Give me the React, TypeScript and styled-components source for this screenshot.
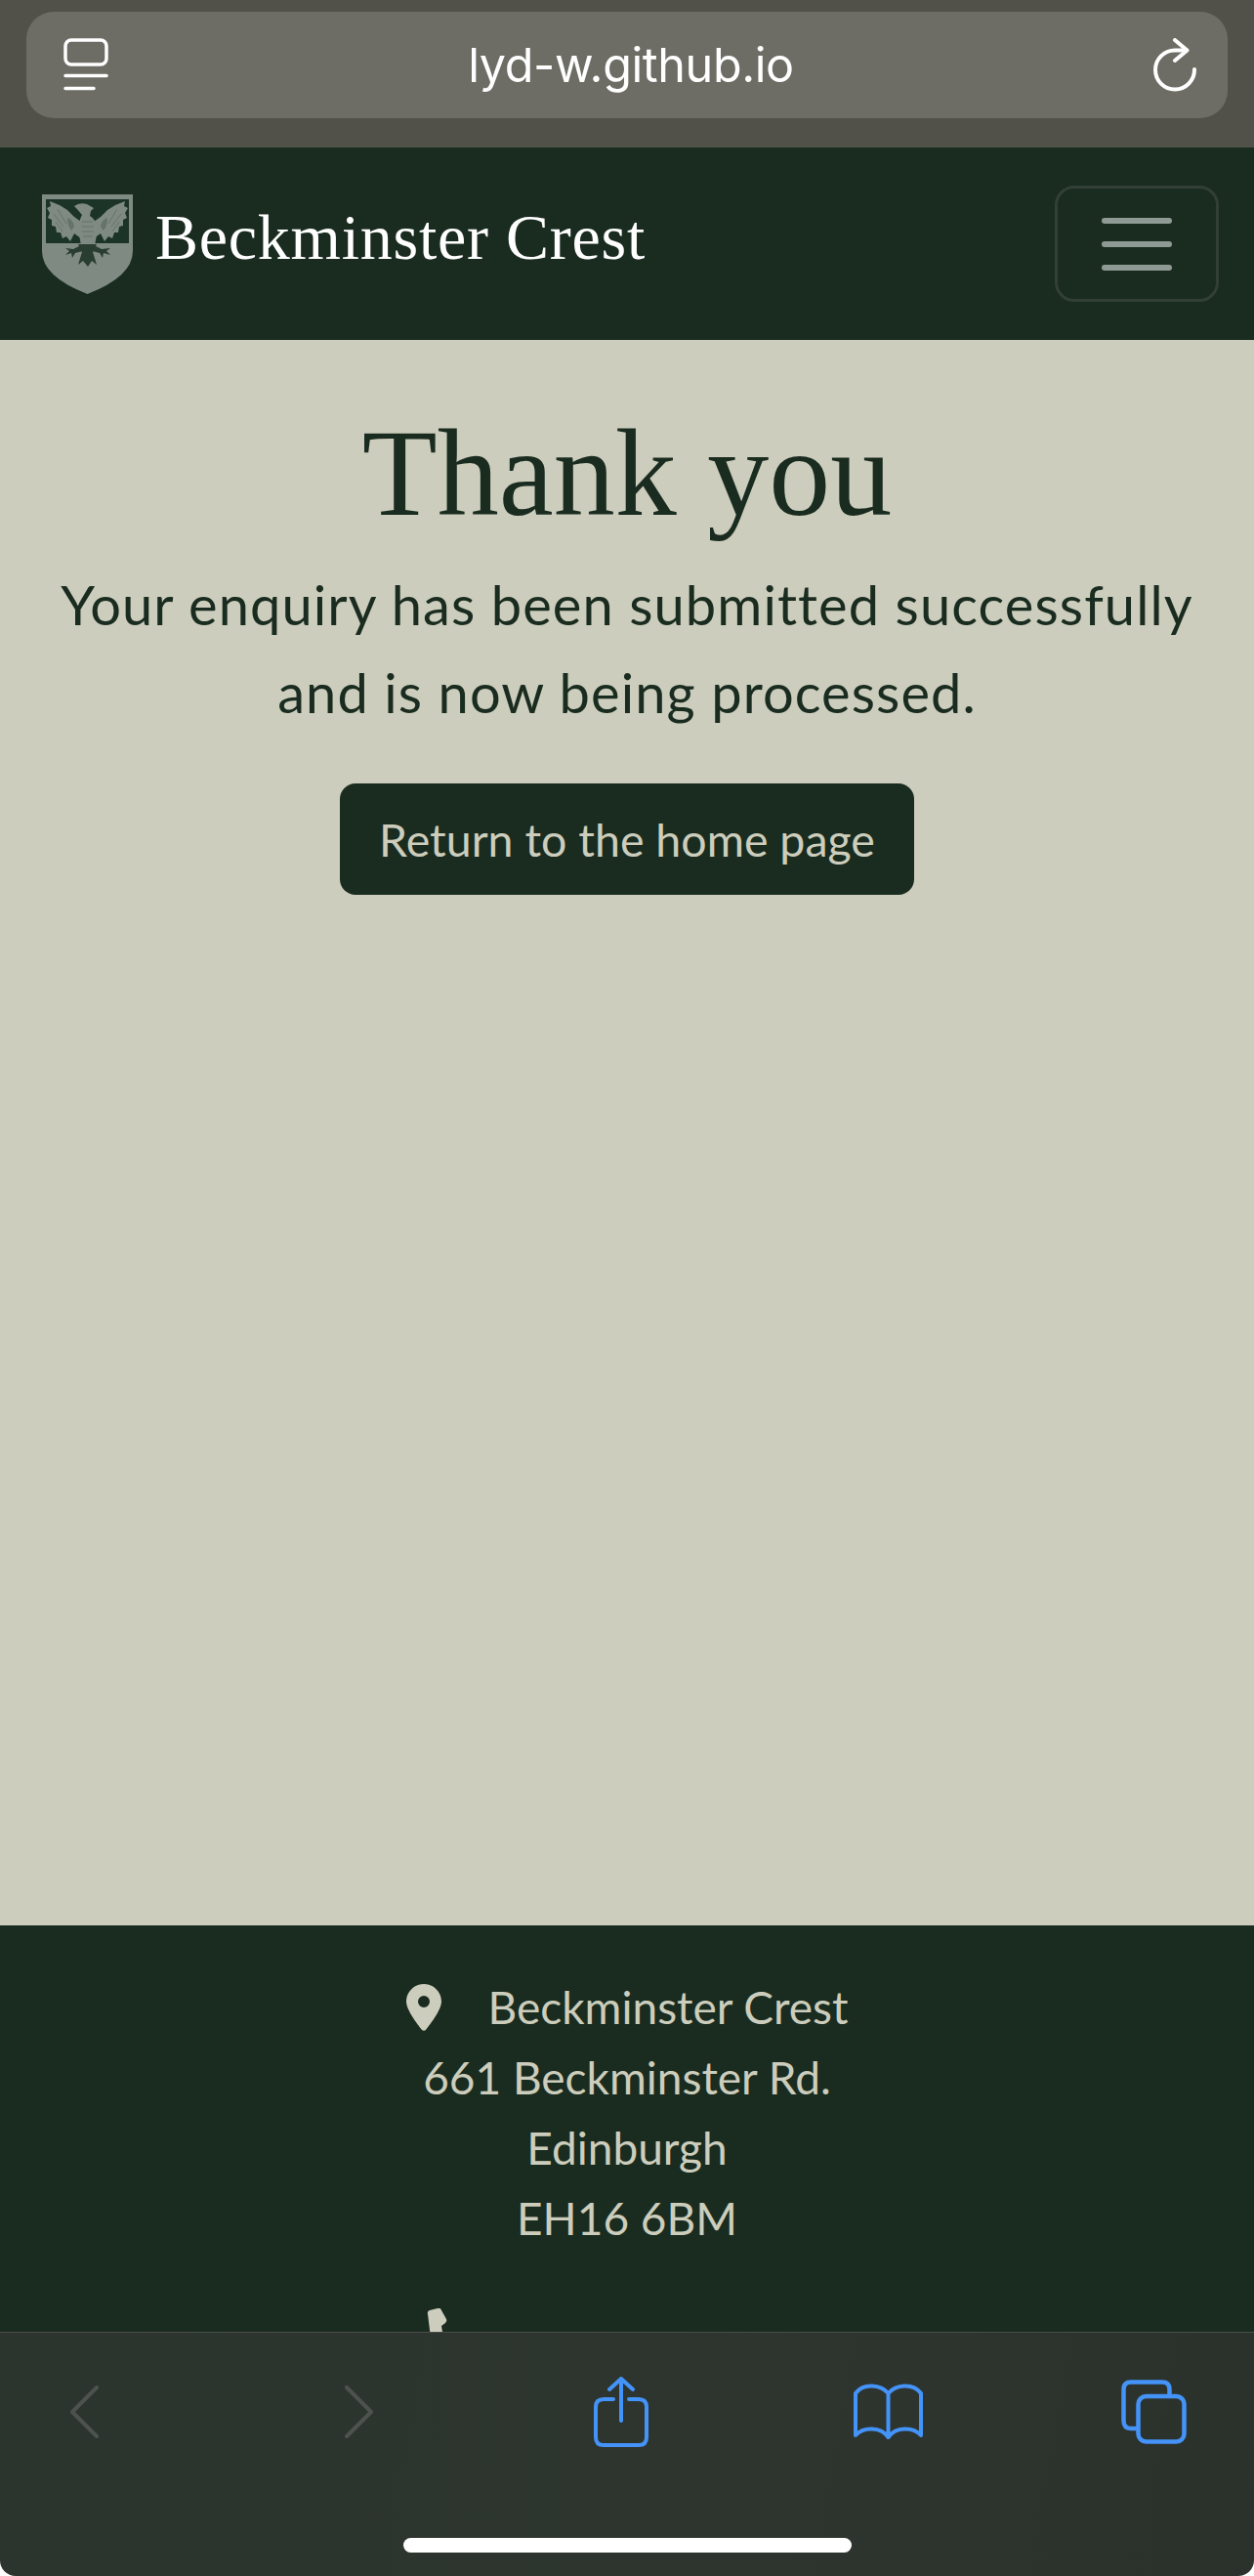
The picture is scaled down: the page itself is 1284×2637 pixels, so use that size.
import React from "react";
import styled, { createGlobalStyle } from "styled-components";

const GlobalStyle = createGlobalStyle`
  html, body {
    margin: 0;
    padding: 0;
    background: #ffffff;
  }
`;

const Page = styled.div`
  display: flex;
  flex-direction: column;
  width: 1284px;
  height: 2637px;
  overflow: hidden;
  font-family: "Lato", "Noto Sans", sans-serif;
`;

const BrowserBar = styled.div`
  flex: none;
  box-sizing: border-box;
  height: 151px;
  padding: 12px 27px 30px;
  background: #51514a;
`;

const AddressBar = styled.div`
  display: flex;
  align-items: center;
  justify-content: space-between;
  box-sizing: border-box;
  height: 109px;
  padding: 0 30px 0 38px;
  border-radius: 28px;
  background: #6d6d65;
`;

const UrlText = styled.span`
  font-family: "Inter", "Liberation Sans", sans-serif;
  font-size: 48.500px;
  color: #ffffff;
  letter-spacing: -0.4px;
`;

const NavBar = styled.nav`
  flex: none;
  display: flex;
  align-items: center;
  justify-content: space-between;
  box-sizing: border-box;
  height: 197px;
  padding: 0 36px 0 43px;
  background: #1a2c20;
`;

const Brand = styled.a`
  display: flex;
  align-items: center;
  gap: 23px;
  font-family: "Liberation Serif", serif;
  font-size: 66px;
  letter-spacing: 0.75px;
  color: #ffffff;
`;

const BrandName = styled.span`
  position: relative;
  top: -7px;
`;

const MenuToggle = styled.button`
  display: flex;
  flex-direction: column;
  align-items: center;
  justify-content: center;
  gap: 18px;
  box-sizing: border-box;
  width: 168px;
  height: 119px;
  padding: 0;
  background: transparent;
  border: 3px solid #323f36;
  border-radius: 20px;
`;

const MenuBar = styled.span`
  width: 72px;
  height: 6px;
  border-radius: 3px;
  background: #8f9a94;
`;

const Main = styled.main`
  flex: 1;
  display: flex;
  flex-direction: column;
  align-items: center;
  padding-top: 62px;
  background: #cccdbc;
  color: #1a2c20;
  text-align: center;
`;

const Title = styled.h1`
  margin: 0;
  font-family: "Liberation Serif", serif;
  font-size: 126px;
  font-weight: 400;
  line-height: 150px;
`;

const Message = styled.p`
  margin: 14px 0 0;
  font-size: 56px;
  line-height: 90px;
  letter-spacing: 1.08px;
`;

const HomeButton = styled.a`
  display: flex;
  align-items: center;
  justify-content: center;
  box-sizing: border-box;
  width: 588px;
  height: 114px;
  margin-top: 48px;
  border-radius: 16px;
  background: #1a2c20;
  color: #cccdbc;
  font-size: 46.500px;
`;

const Footer = styled.footer`
  flex: none;
  box-sizing: border-box;
  height: 416px;
  padding-top: 48px;
  overflow: hidden;
  background: #1a2c20;
  color: #cccdbc;
  font-size: 46px;
  line-height: 72px;
  text-align: center;
`;

const AddressLine = styled.div`
  display: flex;
  align-items: center;
  justify-content: center;
`;

const PinIcon = styled.svg`
  width: 36px;
  height: 48px;
  margin-right: 48px;
  fill: #cccdbc;
`;

const PhoneRow = styled.div`
  display: flex;
  padding: 56px 0 0 437px;
`;

const PhoneIcon = styled.svg`
  width: 48px;
  height: 48px;
  fill: #cccdbc;
`;

const Toolbar = styled.div`
  flex: none;
  box-sizing: border-box;
  height: 250px;
  padding-top: 45px;
  border-top: 1px solid #4a4c4a;
  border-radius: 0 0 16px 16px;
  background: linear-gradient(100deg, #2c342e, #2e352f 60%, #2b322c);
`;

const ToolRow = styled.div`
  display: flex;
  align-items: center;
  height: 72px;
  padding-left: 72px;
`;

const ToolIcon = styled.svg<{ $after?: number }>`
  flex: none;
  margin-right: ${(p) => p.$after ?? 0}px;
  fill: none;
  stroke-linecap: round;
  stroke-linejoin: round;
`;

const HomeIndicator = styled.div`
  width: 459px;
  height: 15px;
  margin: 93px auto 0;
  border-radius: 8px;
  background: #ffffff;
`;

const TabOverviewIcon = () => (
  <svg width="46" height="56" viewBox="0 0 46 56" fill="none" stroke="#ffffff" strokeLinecap="round" strokeWidth="3.5">
    <rect x="2" y="2" width="42" height="25" rx="6" />
    <path d="M2 38.5h42M2 51.5h29" />
  </svg>
);

const ReloadIcon = () => (
  <svg width="46" height="56" viewBox="0 0 46 56" fill="none" stroke="#ffffff" strokeLinecap="round" strokeLinejoin="round" strokeWidth="4">
    <path d="M42 32a20 20 0 1 1-20-19.5h12" />
    <path d="M22 2l12.500 10.500L22 23" />
  </svg>
);

const CrestIcon = () => (
  <svg width="93" height="102" viewBox="0 0 93 102">
    <path d="M0 0H93V58Q93 84 46.500 102Q0 84 0 58Z" fill="#7f8b82" />
    <path d="M4 5H89V50H4Z" fill="#1c3427" />
    {/* wings */}
    <path
      d="M33 40L29 48 25 43 21 45 19 39 15 39 14 33 10 32 10 26 6 24 8 19 5 14 9 12 8 7 18 11 26 16 33 23 40 28 40 45 Z"
      fill="#7f8b82"
    />
    <path
      d="M60 40L64 48 68 43 72 45 74 39 78 39 79 33 83 32 83 26 87 24 85 19 88 14 84 12 85 7 75 11 67 16 60 23 53 28 53 45 Z"
      fill="#7f8b82"
    />
    <path d="M26 24Q32 26 33 33L30 37Q26 32 26 24Z" fill="#667369" />
    <path d="M67 24Q61 26 60 33L63 37Q67 32 67 24Z" fill="#667369" />
    <path d="M12 20L22 33M16 15L25 30M14 28L21 38" stroke="#667369" strokeWidth="1" fill="none" />
    <path d="M81 20L71 33M77 15L68 30M79 28L72 38" stroke="#667369" strokeWidth="1" fill="none" />
    {/* head and body */}
    <path d="M33 12Q38 8 46 10L53 14 50 17 49 22Q56 26 57 36L54 52H40L37 36Q38 26 41 21 37 16 33 12Z" fill="#7f8b82" />
    <path d="M41 28H52M41 33H53M41 38H53M42 43H52" stroke="#667369" strokeWidth="1" />
    {/* legs and tail */}
    <path d="M37 51H56L52 59 56 72 51 68 47 74 42 68 37 72 41 59Z" fill="#2a3d31" />
    <path d="M40 52L32 56 24 55 28 58 24 62 30 60 31 65 34 60 42 58Z" fill="#2a3d31" />
    <path d="M53 52L61 56 70 55 66 58 70 62 63 60 62 65 59 60 51 58Z" fill="#2a3d31" />
  </svg>
);

const App = () => {
  return (
    <Page>
      <GlobalStyle />
      <BrowserBar>
        <AddressBar>
          <TabOverviewIcon />
          <UrlText>lyd-w.github.io</UrlText>
          <ReloadIcon />
        </AddressBar>
      </BrowserBar>
      <NavBar>
        <Brand>
          <CrestIcon />
          <BrandName>Beckminster Crest</BrandName>
        </Brand>
        <MenuToggle aria-label="Toggle navigation">
          <MenuBar />
          <MenuBar />
          <MenuBar />
        </MenuToggle>
      </NavBar>
      <Main>
        <Title>Thank you</Title>
        <Message>
          Your enquiry has been submitted successfully
          <br />
          and is now being processed.
        </Message>
        <HomeButton>Return to the home page</HomeButton>
      </Main>
      <Footer>
        <AddressLine>
          <PinIcon viewBox="0 0 384 512">
            <path d="M215 499C266 435 384 280 384 192 384 86 298 0 192 0S0 86 0 192c0 88 118 243 169 307 12 15 34 15 46 0zM192 128a64 64 0 1 1 0 128 64 64 0 1 1 0-128z" />
          </PinIcon>
          Beckminster Crest
        </AddressLine>
        <div>661 Beckminster Rd.</div>
        <div>Edinburgh</div>
        <div>EH16 6BM</div>
        <PhoneRow>
          <PhoneIcon viewBox="0 0 48 48">
            <path d="M1 6Q0 3 3 2L11 0Q14 -1 15 2L20 11Q21 13 19 15L15 18 17 30H4Z" />
          </PhoneIcon>
        </PhoneRow>
      </Footer>
      <Toolbar>
        <ToolRow>
          <ToolIcon $after={252} width="29" height="54" viewBox="0 0 29 54" stroke="#4e524f" strokeWidth="4">
            <path d="M27 2L2 27 27 52" />
          </ToolIcon>
          <ToolIcon $after={226} width="29" height="54" viewBox="0 0 29 54" stroke="#4e524f" strokeWidth="4">
            <path d="M2 2L27 27 2 52" />
          </ToolIcon>
          <ToolIcon $after={210} width="56" height="72" viewBox="0 0 56 72" stroke="#4493f8" strokeWidth="4">
            <path d="M20 23H10Q2 23 2 31V62Q2 70 10 70H46Q54 70 54 62V31Q54 23 46 23H36" />
            <path d="M28 45V2M16 13L28 2 40 13" />
          </ToolIcon>
          <ToolIcon $after={203} width="71" height="58" viewBox="0 0 71 58" stroke="#4493f8" strokeWidth="4">
            <path d="M35.500 10V55M35.500 10C28 1 10 -1 2 10V53C10 44 28 44 35.500 55 43 44 61 44 69 53V10C61 -1 43 1 35.500 10Z" />
          </ToolIcon>
          <ToolIcon width="67" height="66" viewBox="0 0 67 66" stroke="#4493f8" strokeWidth="4.500">
            <path d="M16 50H10Q2.500 50 2.500 42V10Q2.500 2.500 10 2.500H42Q49.500 2.500 49.500 10V17" />
            <rect x="17.500" y="17" width="47" height="46.500" rx="8" />
          </ToolIcon>
        </ToolRow>
        <HomeIndicator />
      </Toolbar>
    </Page>
  );
};

export default App;
